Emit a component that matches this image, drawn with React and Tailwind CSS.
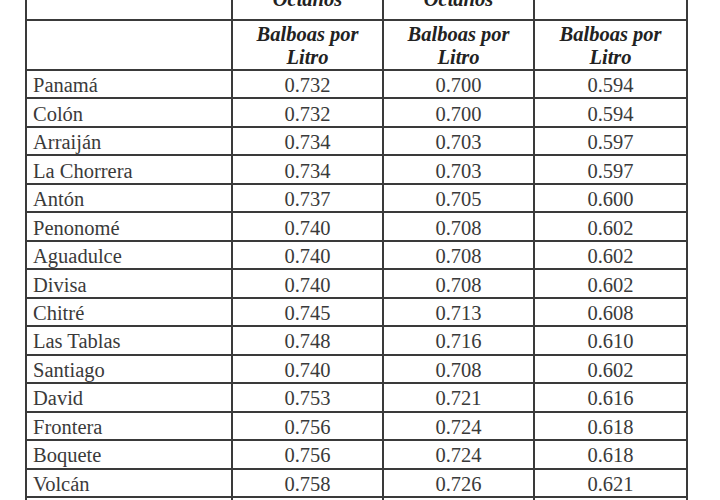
const rows = [
  ["Panamá", "0.732", "0.700", "0.594"],
  ["Colón", "0.732", "0.700", "0.594"],
  ["Arraiján", "0.734", "0.703", "0.597"],
  ["La Chorrera", "0.734", "0.703", "0.597"],
  ["Antón", "0.737", "0.705", "0.600"],
  ["Penonomé", "0.740", "0.708", "0.602"],
  ["Aguadulce", "0.740", "0.708", "0.602"],
  ["Divisa", "0.740", "0.708", "0.602"],
  ["Chitré", "0.745", "0.713", "0.608"],
  ["Las Tablas", "0.748", "0.716", "0.610"],
  ["Santiago", "0.740", "0.708", "0.602"],
  ["David", "0.753", "0.721", "0.616"],
  ["Frontera", "0.756", "0.724", "0.618"],
  ["Boquete", "0.756", "0.724", "0.618"],
  ["Volcán", "0.758", "0.726", "0.621"],
  ["", "", "", ""],
];

const cell = "border-2 border-[#3a3a3a]";
const head = `${cell} font-bold italic leading-[23px] text-[#222]`;
const num = `${cell} pt-[3px] pb-0 text-center leading-[23px]`;

export default function App() {
  return (
    <div className="h-[500px] w-[720px] overflow-hidden bg-white pl-[25px] font-['Liberation_Serif','Times_New_Roman',serif]">
      <table className="-mt-[22px] w-[661px] table-fixed border-collapse font-['Liberation_Serif','Times_New_Roman',serif] text-[20.5px] text-[#3a3a3a]">
        <colgroup>
          <col className="w-[206px]" />
          <col className="w-[151px]" />
          <col className="w-[151px]" />
          <col className="w-[153px]" />
        </colgroup>
        <thead>
          <tr className="h-[41px]">
            <th className={cell}></th>
            <th className={`${head} pb-[8px] align-bottom`}>Octanos</th>
            <th className={`${head} pb-[8px] align-bottom`}>Octanos</th>
            <th className={cell}></th>
          </tr>
          <tr className="h-[48.5px]">
            <th className={cell}></th>
            {[0, 1, 2].map((i) => (
              <th key={i} className={`${head} px-0 pt-[2px] pb-0 align-middle`}>
                Balboas por
                <br />
                Litro
              </th>
            ))}
          </tr>
        </thead>
        <tbody>
          {rows.map((r, i) => (
            <tr key={i} className="h-[28.47px]">
              <td className={`${cell} px-[6px] pt-[3px] pb-0 leading-[23px]`}>{r[0]}</td>
              <td className={num}>{r[1]}</td>
              <td className={num}>{r[2]}</td>
              <td className={num}>{r[3]}</td>
            </tr>
          ))}
        </tbody>
      </table>
    </div>
  );
}
